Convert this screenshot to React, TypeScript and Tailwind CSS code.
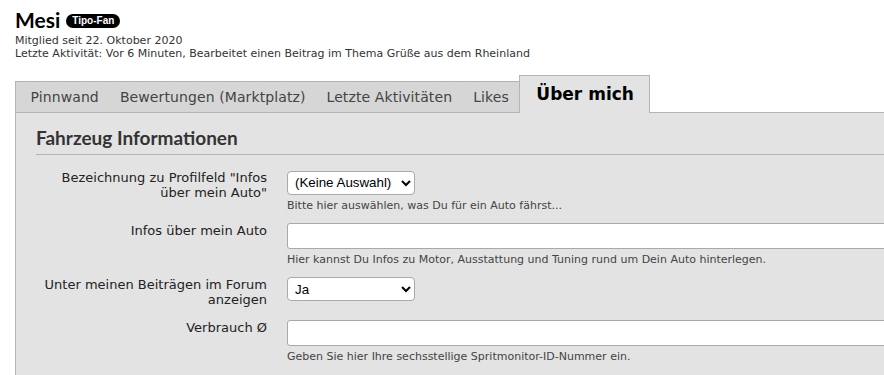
import React from 'react';

const sans = "font-['DejaVu_Sans',Verdana,sans-serif]";

interface FieldRowProps {
  label: React.ReactNode;
  help?: string;
  children: React.ReactNode;
}

const FieldRow: React.FC<FieldRowProps> = ({ label, help, children }) => (
  <div className="flex items-start">
    <div className="w-[231px] shrink-0 text-right text-[13px] leading-[15px] text-[#222]">{label}</div>
    <div className="ml-[20px] flex-1">
      {children}
      {help && <p className="mt-[4px] text-[11px] leading-[14px] text-[#444]">{help}</p>}
    </div>
  </div>
);

const selectClass =
  "h-[24px] w-[128px] rounded-[4px] border border-[#a9a9a9] bg-white pl-[3px] font-['Liberation_Sans',Arial,sans-serif] text-[13.33px] text-black";
const inputClass = 'block h-[26px] w-[700px] rounded-[3px] border border-[#a9a9a9] bg-white';

const App: React.FC = () => {
  const tabs = ['Pinnwand', 'Bewertungen (Marktplatz)', 'Letzte Aktivitäten', 'Likes'];

  return (
    <div className={`${sans} min-h-[375px] w-full overflow-hidden bg-white text-[#222]`}>
      <div className="w-[1100px] pl-[15px] pt-[8px]">
        <header>
          <div className="flex items-center gap-[6px]">
            <h1 className="font-['Lato',sans-serif] text-[21px] font-bold leading-[24px] text-black">Mesi</h1>
            <span className="mt-[2px] rounded-full bg-black px-[6px] font-['Liberation_Sans',Arial,sans-serif] text-[10px] font-bold leading-[14px] text-white">
              Tipo-Fan
            </span>
          </div>
          <p className="mt-[2px] text-[11px] leading-[13px] text-[#333]">Mitglied seit 22. Oktober 2020</p>
          <p className="text-[11px] leading-[13px] text-[#333]">
            Letzte Aktivität: Vor 6 Minuten, Bearbeitet einen Beitrag im Thema Grüße aus dem Rheinland
          </p>
        </header>

        <nav className="mt-[15px] flex items-end border-b border-[#b4b4b4]">
          <div className="flex h-[31px] items-center border-l border-t border-[#b4b4b4] bg-[#d6d6d6] pl-[4px]">
            {tabs.map((t) => (
              <span key={t} className="px-[10.5px] text-[14px] tracking-[0.1px] text-[#444]">
                {t}
              </span>
            ))}
          </div>
          <div className="relative -mb-px flex h-[38px] items-center border-x border-t border-[#b4b4b4] bg-[#e3e3e3] pl-[16px] pr-[15px] text-[17px] font-bold text-black">
            Über mich
          </div>
        </nav>

        <section className="border-l border-[#b4b4b4] bg-[#e3e3e3] pb-[20px] pl-[20px] pt-[13px]">
          <h2 className="border-b border-[#b4b4b4] pb-[5px] font-['Lato',sans-serif] text-[19px] font-bold leading-[23px] text-[#333]">
            Fahrzeug Informationen
          </h2>

          <div className="mt-[15px] flex flex-col gap-[10px]">
            <FieldRow
              label={
                <>
                  Bezeichnung zu Profilfeld "Infos
                  <br />
                  über mein Auto"
                </>
              }
              help="Bitte hier auswählen, was Du für ein Auto fährst..."
            >
              <select className={selectClass} defaultValue="none">
                <option value="none">(Keine Auswahl)</option>
              </select>
            </FieldRow>

            <FieldRow
              label="Infos über mein Auto"
              help="Hier kannst Du Infos zu Motor, Ausstattung und Tuning rund um Dein Auto hinterlegen."
            >
              <input type="text" className={inputClass} />
            </FieldRow>

            <FieldRow
              label={
                <>
                  Unter meinen Beiträgen im Forum
                  <br />
                  anzeigen
                </>
              }
            >
              <div className="pb-[9px]">
                <select className={selectClass} defaultValue="ja">
                  <option value="ja">Ja</option>
                  <option value="nein">Nein</option>
                </select>
              </div>
            </FieldRow>

            <FieldRow label="Verbrauch Ø" help="Geben Sie hier Ihre sechsstellige Spritmonitor-ID-Nummer ein.">
              <input type="text" className={inputClass} />
            </FieldRow>
          </div>
        </section>
      </div>
    </div>
  );
};

export default App;
